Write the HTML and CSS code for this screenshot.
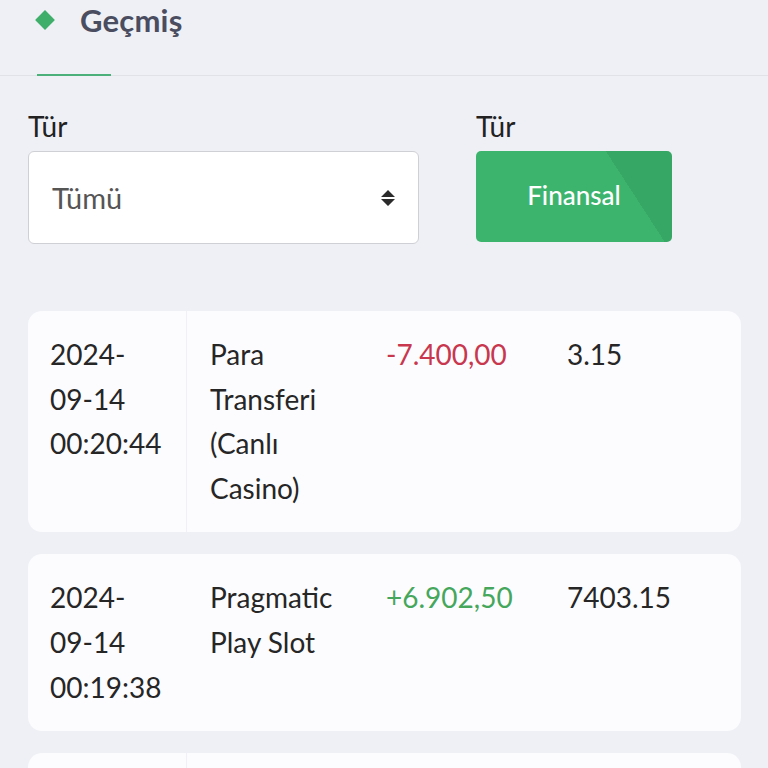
FILE: index.html
```html
<!DOCTYPE html>
<html lang="tr">
<head>
<meta charset="utf-8">
<title>Geçmiş</title>
<link rel="stylesheet" href="styles.css">
</head>
<body>
<header class="header">
  <div class="title-row">
    <span class="diamond"></span>
    <h1 class="title">Geçmiş</h1>
  </div>
  <div class="tab-indicator"></div>
</header>

<section class="filters">
  <div class="field field-select">
    <label class="label">Tür</label>
    <div class="select">
      <span class="select-value">Tümü</span>
      <svg class="select-arrows" width="16" height="20" viewBox="0 0 16 20"><path d="M8 2 L15 9 H1 Z M1 11 H15 L8 18 Z" fill="#2b2b2b"/></svg>
    </div>
  </div>
  <div class="field field-button">
    <label class="label">Tür</label>
    <button class="btn">Finansal</button>
  </div>
</section>

<section class="list">
  <div class="card sep">
    <div class="cell date">2024-<br>09-14<br>00:20:44</div>
    <div class="cell desc">Para<br>Transferi<br>(Canlı<br>Casino)</div>
    <div class="cell amount neg">-7.400,00</div>
    <div class="cell balance">3.15</div>
  </div>
  <div class="card">
    <div class="cell date">2024-<br>09-14<br>00:19:38</div>
    <div class="cell desc">Pragmatic<br>Play Slot</div>
    <div class="cell amount pos">+6.902,50</div>
    <div class="cell balance">7403.15</div>
  </div>
  <div class="card sep">
    <div class="cell date">2024-<br>09-14<br>00:18:02</div>
    <div class="cell desc">Pragmatic<br>Play Slot</div>
    <div class="cell amount neg">-500,00</div>
    <div class="cell balance">500.65</div>
  </div>
</section>
</body>
</html>
```

FILE: styles.css
```css
* { box-sizing: border-box; }
html, body { margin: 0; padding: 0; }
body {
  background: #eff0f5;
  font-family: Lato, "Open Sans", sans-serif;
  color: #262626;
  width: 768px;
  overflow: hidden;
}
.header {
  border-bottom: 1px solid #e1e2e8;
  height: 76px;
  display: flex;
  flex-direction: column;
  justify-content: space-between;
}
.title-row {
  display: flex;
  align-items: center;
  height: 40px;
  padding-left: 38px;
}
.diamond {
  width: 14px;
  height: 14px;
  background: #3fae6a;
  transform: rotate(45deg);
  margin-right: 28px;
}
.title {
  margin: 0;
  font-size: 31px;
  font-weight: 700;
  color: #4a4d5f;
  letter-spacing: 0.2px;
}
.tab-indicator {
  width: 74px;
  height: 2px;
  margin-left: 37px;
  margin-bottom: -1px;
  background: #4cb07a;
}
.filters {
  display: flex;
  padding: 34px 28px 0 28px;
  gap: 57px;
}
.field { display: flex; flex-direction: column; }
.label {
  font-size: 28px;
  line-height: 32px;
  color: #222;
  margin-bottom: 9px;
}
.field-select { width: 391px; }
.select {
  height: 93px;
  background: #fff;
  border: 1px solid #cfd0d5;
  border-radius: 6px;
  display: flex;
  align-items: center;
  justify-content: space-between;
  padding: 0 22px 0 23px;
}
.select-value {
  font-size: 29px;
  color: #555;
}
.btn {
  width: 196px;
  height: 91px;
  border: none;
  border-radius: 5px;
  background: linear-gradient(57deg, #3db46e 74%, #37a765 74%);
  color: #fff;
  font-family: Lato, sans-serif;
  font-size: 26px;
  font-weight: 500;
  padding: 0;
  padding-bottom: 4px;
}
.list {
  padding: 67px 27px 0 28px;
  display: flex;
  flex-direction: column;
  gap: 22px;
}
.card {
  background: #fcfcfe;
  border-radius: 14px;
  display: grid;
  grid-template-columns: 159px 177px 181px 1fr;
  font-size: 28px;
  line-height: 44.6px;
}
.cell { padding: 21px 0 22px 22px; }
.desc { padding-left: 23px; }
.card.sep .date { border-right: 1px solid #f1f1f5; }
.neg { color: #c8374e; }
.pos { color: #45a75c; }
```
